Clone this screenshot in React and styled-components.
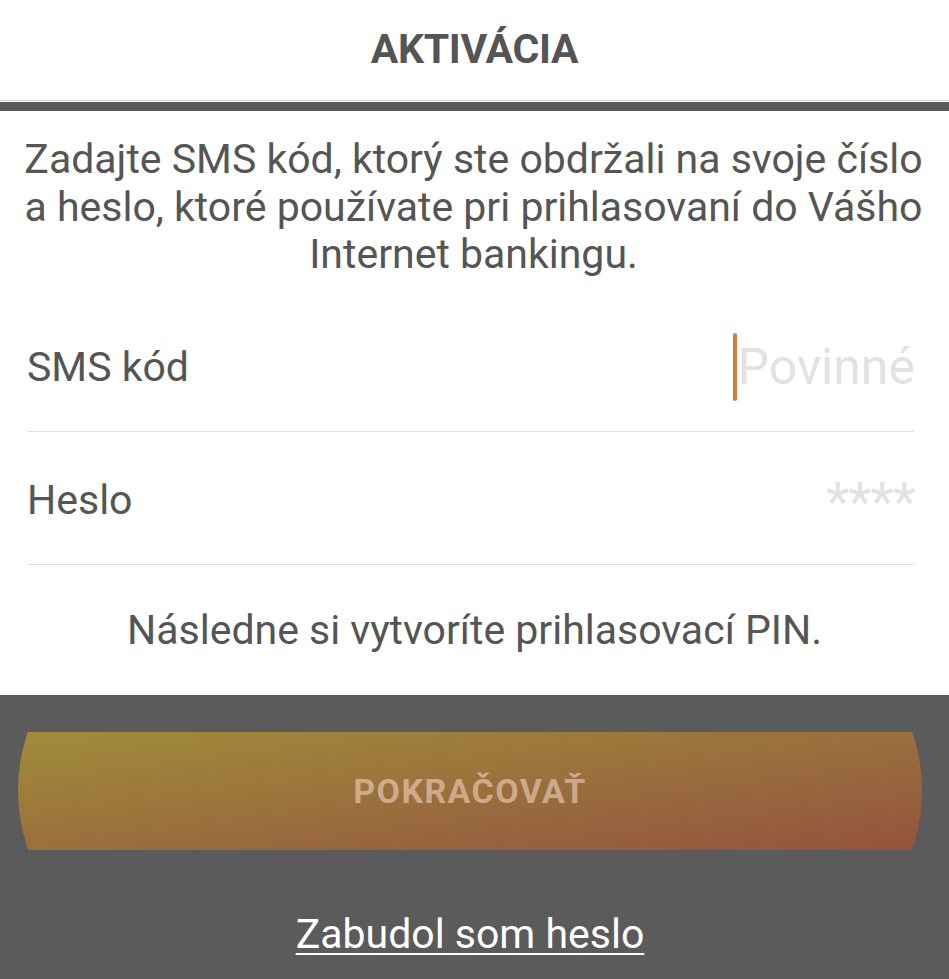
import styled, { createGlobalStyle } from "styled-components";

const GlobalStyle = createGlobalStyle`
  html, body {
    margin: 0;
    padding: 0;
    background: #fff;
  }
  body {
    font-family: Roboto, "Noto Sans", "Liberation Sans", sans-serif;
    -webkit-font-smoothing: antialiased;
  }
  * {
    box-sizing: border-box;
  }
`;

export default function App() {
  const fields = [
    { label: "SMS kód", placeholder: "Povinné", focused: true },
    { label: "Heslo", placeholder: "****", focused: false },
  ];

  return (
    <>
      <GlobalStyle />
      <Page>
        <Header>
          <Title>AKTIVÁCIA</Title>
        </Header>
        <HeaderBar />
        <Intro>
          Zadajte SMS kód, ktorý ste obdržali na svoje číslo a heslo, ktoré
          používate pri prihlasovaní do Vášho Internet bankingu.
        </Intro>
        <Form>
          {fields.map((field) => (
            <Row key={field.label}>
              <Label>{field.label}</Label>
              <Value>
                {field.focused && <Caret />}
                <Placeholder stars={!field.focused}>{field.placeholder}</Placeholder>
              </Value>
            </Row>
          ))}
        </Form>
        <Note>Následne si vytvoríte prihlasovací PIN.</Note>
        <Footer>
          <ContinueButton>POKRAČOVAŤ</ContinueButton>
          <ForgotLink href="#">Zabudol som heslo</ForgotLink>
        </Footer>
      </Page>
    </>
  );
}

const Page = styled.div`
  display: flex;
  flex-direction: column;
  min-height: 979px;
  color: #555;
`;

const Header = styled.header`
  height: 101px;
  display: flex;
  align-items: center;
  justify-content: center;
  padding-bottom: 2px;
  border-bottom: 1px solid #d4d4d4;
`;

const Title = styled.h1`
  margin: 0;
  font-size: 41px;
  font-weight: 700;
  color: #555;
  letter-spacing: -0.3px;
`;

const HeaderBar = styled.div`
  height: 9px;
  background: #5b5b5b;
  margin-top: 1px;
`;

const Intro = styled.p`
  margin: 0;
  padding: 25px 24px 0 22px;
  font-size: 41px;
  line-height: 47.5px;
  text-align: center;
  color: #555;
`;

const Form = styled.div`
  display: flex;
  flex-direction: column;
  padding: 20px 35px 0 27px;
`;

const Row = styled.div`
  height: 133px;
  display: flex;
  align-items: center;
  justify-content: space-between;
  padding-top: 5px;
  border-bottom: 1px solid #dedede;
`;

const Label = styled.span`
  font-size: 41px;
  color: #555;
`;

const Value = styled.div`
  display: flex;
  align-items: center;
  margin-right: -1px;
`;

const Caret = styled.span`
  width: 4px;
  height: 68px;
  border-radius: 2px;
  background: #dc7a3a;
  margin-right: 1px;
`;

const Placeholder = styled.span`
  font-size: 50px;
  color: #e2e2e2;
  line-height: 1;
  ${(p) => p.stars && `
    font-size: 54px;
    letter-spacing: -1px;
    padding-top: 4px;
  `}
`;

const Note = styled.div`
  height: 130px;
  display: flex;
  align-items: center;
  justify-content: center;
  font-size: 41px;
  color: #555;
`;

const Footer = styled.footer`
  flex: 1;
  background: #5b5b5b;
  display: flex;
  flex-direction: column;
  align-items: center;
  padding: 37px 27px 0 18px;
`;

const ContinueButton = styled.button`
  width: 100%;
  height: 118px;
  border: none;
  padding: 0;
  background: linear-gradient(to bottom right, #a18c3a, #93533f);
  clip-path: ellipse(50% 240% at 50% 50%);
  color: rgba(250, 222, 210, 0.55);
  font-family: Roboto, "Noto Sans", "Liberation Sans", sans-serif;
  font-size: 34px;
  font-weight: 700;
  letter-spacing: 1.4px;
  cursor: pointer;
`;

const ForgotLink = styled.a`
  margin-top: 60px;
  font-size: 41px;
  color: #fff;
  text-decoration: underline;
  text-decoration-thickness: 2px;
  text-underline-offset: 5px;
`;
